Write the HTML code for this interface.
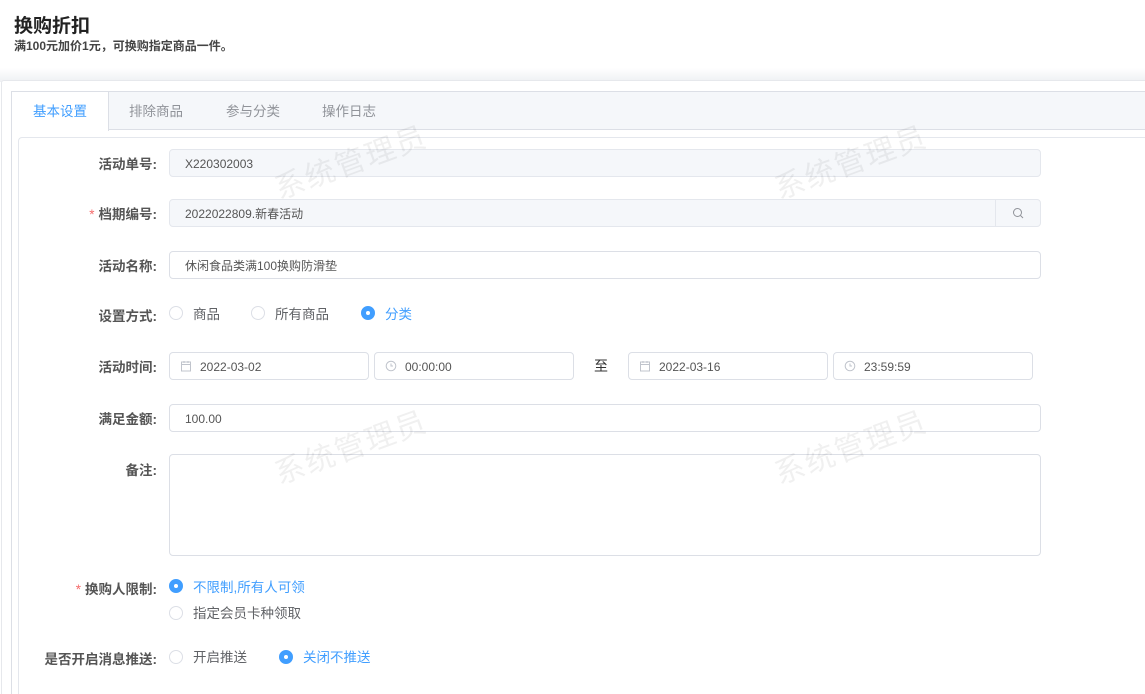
<!DOCTYPE html><html style="overflow:hidden;height:694px"><head><meta charset="utf-8"><style>
*{box-sizing:border-box;margin:0;padding:0}
body{width:1145px;height:694px;overflow:hidden;background:#fff;font-family:"Liberation Sans","Noto Sans CJK SC",sans-serif;color:#606266;position:relative}
.a{position:absolute}
.h1{left:14px;top:11px;font-size:19px;font-weight:bold;color:#222}
.sub{left:14px;top:37px;font-size:12px;font-weight:bold;color:#444}
.band{left:0;top:68px;width:1145px;height:14px;background:linear-gradient(#fff,#eef0f3)}
.card{left:1px;top:80px;width:1144px;height:614px;border:1px solid #e6e8ec;border-bottom:0;border-right:0;border-radius:3px 0 0 0;background:#fff}
.tabs{left:11px;top:91px;width:1134px;height:603px;border:1px solid #dcdfe6;border-bottom:0;border-right:0}
.tabh{left:12px;top:92px;width:1133px;height:38px;background:#f5f7fa;border-bottom:1px solid #dcdfe6}
.tab{top:92px;height:39px;line-height:39px;font-size:13.5px;color:#909399}
.tab.on{background:#fff;color:#409eff;border-right:1px solid #dcdfe6;left:12px;width:97px;text-align:center}
.panel{left:18px;top:137px;width:1127px;height:557px;border:1px solid #e4e7ed;border-bottom:0;border-right:0;border-radius:4px 0 0 0}
.lbl{width:157px;left:0;text-align:right;font-size:13.5px;font-weight:bold;color:#555}
.lbl i{color:#f56c6c;font-style:normal;font-weight:normal;margin-right:4px}
.inp{height:28px;border:1px solid #dcdfe6;border-radius:4px;font-size:12px;color:#555;line-height:28px;padding-left:15px}
.dis{background:#f5f7fa;border-color:#e4e7ed}
.r{width:14px;height:14px;border-radius:50%;border:1px solid #dcdfe6;background:#fff}
.r.on{background:#409eff;border-color:#409eff}
.r.on:after{content:"";position:absolute;left:4px;top:4px;width:4px;height:4px;border-radius:50%;background:#fff}
.t{font-size:13.5px;color:#606266}
.t.on{color:#409eff}
.wm{font-size:30px;color:rgba(0,0,0,0.06);transform:rotate(-20deg);letter-spacing:2px}
</style></head><body>
<div class="a h1">换购折扣</div>
<div class="a sub">满100元加价1元，可换购指定商品一件。</div>
<div class="a band"></div>
<div class="a card"></div>
<div class="a tabs"></div>
<div class="a tabh"></div>
<div class="a tab on">基本设置</div>
<div class="a tab" style="left:129px">排除商品</div>
<div class="a tab" style="left:226px">参与分类</div>
<div class="a tab" style="left:322px">操作日志</div>
<div class="a panel"></div>

<div class="a lbl" style="top:153px">活动单号:</div>
<div class="a inp dis" style="left:169px;top:149px;width:872px">X220302003</div>

<div class="a lbl" style="top:203px"><i>*</i>档期编号:</div>
<div class="a inp dis" style="left:169px;top:199px;width:872px">2022022809.新春活动</div>
<div class="a" style="left:995px;top:199px;width:46px;height:28px;border-left:1px solid #e4e7ed"></div>
<svg class="a" style="left:1012px;top:207px" width="12" height="12" viewBox="0 0 12 12"><circle cx="5.5" cy="5.5" r="4" fill="none" stroke="#909399" stroke-width="1"/><path d="M8.5 8.5L11 11" stroke="#909399"/></svg>

<div class="a lbl" style="top:255px">活动名称:</div>
<div class="a inp" style="left:169px;top:251px;width:872px">休闲食品类满100换购防滑垫</div>

<div class="a lbl" style="top:305px">设置方式:</div>
<div class="a r" style="left:169px;top:306px"></div><div class="a t" style="left:193px;top:303px">商品</div>
<div class="a r" style="left:251px;top:306px"></div><div class="a t" style="left:275px;top:303px">所有商品</div>
<div class="a r on" style="left:361px;top:306px"></div><div class="a t on" style="left:385px;top:303px">分类</div>

<div class="a lbl" style="top:356px">活动时间:</div>
<div class="a inp" style="left:169px;top:352px;width:200px;padding-left:30px">2022-03-02</div>
<div class="a inp" style="left:374px;top:352px;width:200px;padding-left:30px">00:00:00</div>
<div class="a t" style="left:594px;top:356px;color:#333;font-size:14px">至</div>
<div class="a inp" style="left:628px;top:352px;width:200px;padding-left:30px">2022-03-16</div>
<div class="a inp" style="left:833px;top:352px;width:200px;padding-left:30px">23:59:59</div>
<svg class="a" style="left:180px;top:360px" width="12" height="12" viewBox="0 0 12 12"><rect x="1.5" y="2" width="9" height="9" fill="none" stroke="#c0c4cc"/><path d="M1.5 4.5h9M4 1v2M8 1v2" stroke="#c0c4cc"/></svg>
<svg class="a" style="left:639px;top:360px" width="12" height="12" viewBox="0 0 12 12"><rect x="1.5" y="2" width="9" height="9" fill="none" stroke="#c0c4cc"/><path d="M1.5 4.5h9M4 1v2M8 1v2" stroke="#c0c4cc"/></svg>
<svg class="a" style="left:385px;top:360px" width="12" height="12" viewBox="0 0 12 12"><circle cx="6" cy="6" r="4.8" fill="none" stroke="#c0c4cc"/><path d="M6 3.5V6h2" fill="none" stroke="#c0c4cc"/></svg>
<svg class="a" style="left:844px;top:360px" width="12" height="12" viewBox="0 0 12 12"><circle cx="6" cy="6" r="4.8" fill="none" stroke="#c0c4cc"/><path d="M6 3.5V6h2" fill="none" stroke="#c0c4cc"/></svg>

<div class="a lbl" style="top:408px">满足金额:</div>
<div class="a inp" style="left:169px;top:404px;width:872px">100.00</div>

<div class="a lbl" style="top:459px">备注:</div>
<div class="a inp" style="left:169px;top:454px;width:872px;height:102px"></div>

<div class="a lbl" style="top:578px"><i>*</i>换购人限制:</div>
<div class="a r on" style="left:169px;top:579px"></div><div class="a t on" style="left:193px;top:576px">不限制,所有人可领</div>
<div class="a r" style="left:169px;top:606px"></div><div class="a t" style="left:193px;top:602px">指定会员卡种领取</div>

<div class="a lbl" style="top:648px">是否开启消息推送:</div>
<div class="a r" style="left:169px;top:650px"></div><div class="a t" style="left:193px;top:646px">开启推送</div>
<div class="a r on" style="left:279px;top:650px"></div><div class="a t on" style="left:303px;top:646px">关闭不推送</div>

<div class="a wm" style="left:270px;top:138px">系统管理员</div>
<div class="a wm" style="left:770px;top:138px">系统管理员</div>
<div class="a wm" style="left:270px;top:423px">系统管理员</div>
<div class="a wm" style="left:770px;top:423px">系统管理员</div>
</body></html>
